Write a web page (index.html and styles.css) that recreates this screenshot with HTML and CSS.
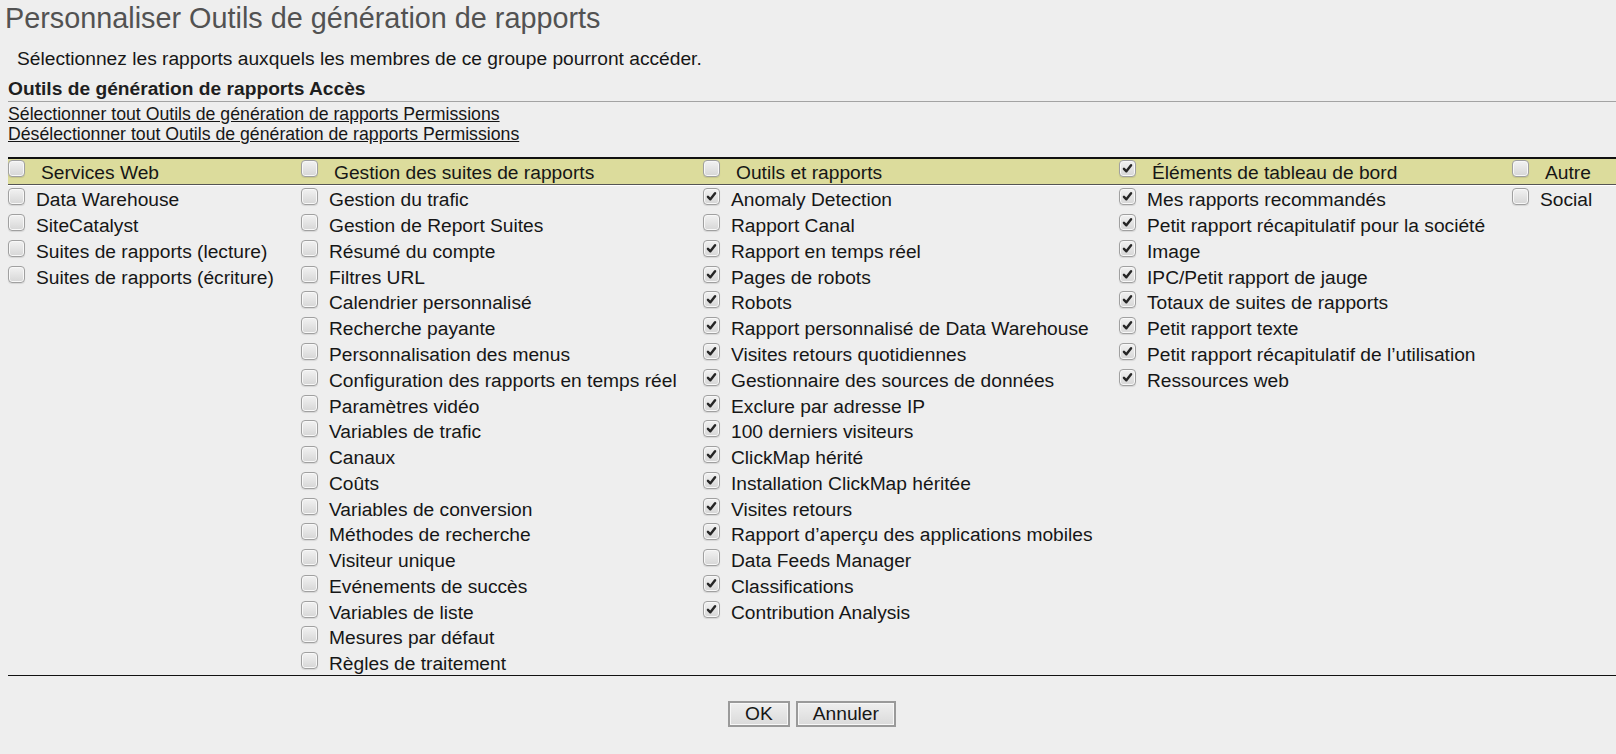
FILE: index.html
```html
<!DOCTYPE html>
<html lang="fr">
<head>
<meta charset="utf-8">
<title>Personnaliser Outils de génération de rapports</title>
<link rel="stylesheet" href="styles.css">
</head>
<body>
<h1 class="title">Personnaliser Outils de génération de rapports</h1>
<p class="intro">Sélectionnez les rapports auxquels les membres de ce groupe pourront accéder.</p>
<h2 class="section-title">Outils de génération de rapports Accès</h2>
<div class="links">
  <a href="#" class="link">Sélectionner tout Outils de génération de rapports Permissions</a>
  <a href="#" class="link">Désélectionner tout Outils de génération de rapports Permissions</a>
</div>

<div class="perm">
  <div class="perm-head">
    <div class="hcell"><span class="cb"></span><span class="htext">Services Web</span></div>
    <div class="hcell"><span class="cb"></span><span class="htext">Gestion des suites de rapports</span></div>
    <div class="hcell"><span class="cb"></span><span class="htext">Outils et rapports</span></div>
    <div class="hcell"><span class="cb on"><svg viewBox="0 0 16 16"><path d="M4.2 8.4 L6.8 11 L11.8 4.6"/></svg></span><span class="htext">Éléments de tableau de bord</span></div>
    <div class="hcell"><span class="cb"></span><span class="htext">Autre</span></div>
  </div>
  <div class="perm-body">
    <ul class="col">
      <li class="item"><span class="cb"></span>Data Warehouse</li>
      <li class="item"><span class="cb"></span>SiteCatalyst</li>
      <li class="item"><span class="cb"></span>Suites de rapports (lecture)</li>
      <li class="item"><span class="cb"></span>Suites de rapports (écriture)</li>
    </ul>
    <ul class="col">
      <li class="item"><span class="cb"></span>Gestion du trafic</li>
      <li class="item"><span class="cb"></span>Gestion de Report Suites</li>
      <li class="item"><span class="cb"></span>Résumé du compte</li>
      <li class="item"><span class="cb"></span>Filtres URL</li>
      <li class="item"><span class="cb"></span>Calendrier personnalisé</li>
      <li class="item"><span class="cb"></span>Recherche payante</li>
      <li class="item"><span class="cb"></span>Personnalisation des menus</li>
      <li class="item"><span class="cb"></span>Configuration des rapports en temps réel</li>
      <li class="item"><span class="cb"></span>Paramètres vidéo</li>
      <li class="item"><span class="cb"></span>Variables de trafic</li>
      <li class="item"><span class="cb"></span>Canaux</li>
      <li class="item"><span class="cb"></span>Coûts</li>
      <li class="item"><span class="cb"></span>Variables de conversion</li>
      <li class="item"><span class="cb"></span>Méthodes de recherche</li>
      <li class="item"><span class="cb"></span>Visiteur unique</li>
      <li class="item"><span class="cb"></span>Evénements de succès</li>
      <li class="item"><span class="cb"></span>Variables de liste</li>
      <li class="item"><span class="cb"></span>Mesures par défaut</li>
      <li class="item"><span class="cb"></span>Règles de traitement</li>
    </ul>
    <ul class="col">
      <li class="item"><span class="cb on"><svg viewBox="0 0 16 16"><path d="M4.2 8.4 L6.8 11 L11.8 4.6"/></svg></span>Anomaly Detection</li>
      <li class="item"><span class="cb"></span>Rapport Canal</li>
      <li class="item"><span class="cb on"><svg viewBox="0 0 16 16"><path d="M4.2 8.4 L6.8 11 L11.8 4.6"/></svg></span>Rapport en temps réel</li>
      <li class="item"><span class="cb on"><svg viewBox="0 0 16 16"><path d="M4.2 8.4 L6.8 11 L11.8 4.6"/></svg></span>Pages de robots</li>
      <li class="item"><span class="cb on"><svg viewBox="0 0 16 16"><path d="M4.2 8.4 L6.8 11 L11.8 4.6"/></svg></span>Robots</li>
      <li class="item"><span class="cb on"><svg viewBox="0 0 16 16"><path d="M4.2 8.4 L6.8 11 L11.8 4.6"/></svg></span>Rapport personnalisé de Data Warehouse</li>
      <li class="item"><span class="cb on"><svg viewBox="0 0 16 16"><path d="M4.2 8.4 L6.8 11 L11.8 4.6"/></svg></span>Visites retours quotidiennes</li>
      <li class="item"><span class="cb on"><svg viewBox="0 0 16 16"><path d="M4.2 8.4 L6.8 11 L11.8 4.6"/></svg></span>Gestionnaire des sources de données</li>
      <li class="item"><span class="cb on"><svg viewBox="0 0 16 16"><path d="M4.2 8.4 L6.8 11 L11.8 4.6"/></svg></span>Exclure par adresse IP</li>
      <li class="item"><span class="cb on"><svg viewBox="0 0 16 16"><path d="M4.2 8.4 L6.8 11 L11.8 4.6"/></svg></span>100 derniers visiteurs</li>
      <li class="item"><span class="cb on"><svg viewBox="0 0 16 16"><path d="M4.2 8.4 L6.8 11 L11.8 4.6"/></svg></span>ClickMap hérité</li>
      <li class="item"><span class="cb on"><svg viewBox="0 0 16 16"><path d="M4.2 8.4 L6.8 11 L11.8 4.6"/></svg></span>Installation ClickMap héritée</li>
      <li class="item"><span class="cb on"><svg viewBox="0 0 16 16"><path d="M4.2 8.4 L6.8 11 L11.8 4.6"/></svg></span>Visites retours</li>
      <li class="item"><span class="cb on"><svg viewBox="0 0 16 16"><path d="M4.2 8.4 L6.8 11 L11.8 4.6"/></svg></span>Rapport d’aperçu des applications mobiles</li>
      <li class="item"><span class="cb"></span>Data Feeds Manager</li>
      <li class="item"><span class="cb on"><svg viewBox="0 0 16 16"><path d="M4.2 8.4 L6.8 11 L11.8 4.6"/></svg></span>Classifications</li>
      <li class="item"><span class="cb on"><svg viewBox="0 0 16 16"><path d="M4.2 8.4 L6.8 11 L11.8 4.6"/></svg></span>Contribution Analysis</li>
    </ul>
    <ul class="col">
      <li class="item"><span class="cb on"><svg viewBox="0 0 16 16"><path d="M4.2 8.4 L6.8 11 L11.8 4.6"/></svg></span>Mes rapports recommandés</li>
      <li class="item"><span class="cb on"><svg viewBox="0 0 16 16"><path d="M4.2 8.4 L6.8 11 L11.8 4.6"/></svg></span>Petit rapport récapitulatif pour la société</li>
      <li class="item"><span class="cb on"><svg viewBox="0 0 16 16"><path d="M4.2 8.4 L6.8 11 L11.8 4.6"/></svg></span>Image</li>
      <li class="item"><span class="cb on"><svg viewBox="0 0 16 16"><path d="M4.2 8.4 L6.8 11 L11.8 4.6"/></svg></span>IPC/Petit rapport de jauge</li>
      <li class="item"><span class="cb on"><svg viewBox="0 0 16 16"><path d="M4.2 8.4 L6.8 11 L11.8 4.6"/></svg></span>Totaux de suites de rapports</li>
      <li class="item"><span class="cb on"><svg viewBox="0 0 16 16"><path d="M4.2 8.4 L6.8 11 L11.8 4.6"/></svg></span>Petit rapport texte</li>
      <li class="item"><span class="cb on"><svg viewBox="0 0 16 16"><path d="M4.2 8.4 L6.8 11 L11.8 4.6"/></svg></span>Petit rapport récapitulatif de l’utilisation</li>
      <li class="item"><span class="cb on"><svg viewBox="0 0 16 16"><path d="M4.2 8.4 L6.8 11 L11.8 4.6"/></svg></span>Ressources web</li>
    </ul>
    <ul class="col">
      <li class="item"><span class="cb"></span>Social</li>
    </ul>
  </div>
</div>

<div class="actions">
  <button type="button" class="btn">OK</button>
  <button type="button" class="btn">Annuler</button>
</div>
</body>
</html>
```

FILE: styles.css
```css
html, body {
  margin: 0;
  padding: 0;
  background: #eeeeee;
}

body {
  padding-left: 8px;
  font-family: "Liberation Sans", Arial, sans-serif;
  color: #161616;
  font-size: 19.2px;
}

.title {
  margin: 0 0 0 -3px;
  padding-top: 1.5px;
  font-size: 28.8px;
  line-height: 33px;
  font-weight: normal;
  color: #525252;
}

.intro {
  margin: 13.8px 0 0 9px;
  font-size: 19.2px;
  line-height: 22px;
}

.section-title {
  margin: 7.6px 0 0 0;
  padding-bottom: 1px;
  border-bottom: 1px solid #a3a3a3;
  font-size: 19.2px;
  line-height: 22px;
  font-weight: bold;
  color: #1e1e1e;
}

.links {
  display: flex;
  flex-direction: column;
  align-items: flex-start;
  padding-top: 2px;
}

.link {
  font-size: 17.7px;
  line-height: 20.6px;
  color: #161616;
  text-decoration: underline;
}

.perm {
  margin-top: 11.8px;
}

.perm-head {
  display: grid;
  grid-template-columns: 293px 402px 416px 393px 1fr;
  background: #dcdc9c;
  border-top: 2px solid #111;
  border-bottom: 1px solid #555;
  box-shadow: 0 1px 0 #ffffff;
  height: 25px;
}

.hcell {
  display: flex;
  align-items: flex-start;
  padding-top: 3px;
  line-height: 22px;
  white-space: nowrap;
}

.hcell .cb {
  margin-top: -2px;
  margin-right: 16px;
}

.perm-body {
  display: grid;
  grid-template-columns: 293px 402px 416px 393px 1fr;
  margin-top: 1px;
  border-bottom: 1px solid #111;
}

.col {
  list-style: none;
  margin: 0;
  padding: 0;
}

.item {
  display: flex;
  align-items: flex-start;
  height: 25.77px;
  box-sizing: border-box;
  padding-top: 2.5px;
  line-height: 23px;
  white-space: nowrap;
}

.item .cb {
  margin-top: 0;
  margin-right: 11px;
}

.cb {
  flex: none;
  width: 17px;
  height: 17px;
  box-sizing: border-box;
  border: 1px solid #a0a0a0;
  border-radius: 4px;
  background: linear-gradient(#f2f2f2, #d6d6d6);
  box-shadow: inset 0 0 0 1px #f8f8f8, 0 1px 1px rgba(0,0,0,0.10);
  display: inline-flex;
  align-items: center;
  justify-content: center;
}

.cb svg {
  width: 15px;
  height: 15px;
}

.cb path {
  fill: none;
  stroke: #262626;
  stroke-width: 2.6;
  stroke-linecap: round;
  stroke-linejoin: round;
}

.actions {
  display: flex;
  justify-content: center;
  gap: 6px;
  margin-top: 25px;
}

.btn {
  font-family: "Liberation Sans", Arial, sans-serif;
  font-size: 19.2px;
  line-height: 22px;
  height: 26px;
  padding: 0 15px;
  color: #161616;
  background: linear-gradient(#efefef, #dadada);
  border: 2px solid #9a9a9a;
  box-shadow: inset 0 0 0 1px #f7f7f7;
  border-radius: 0;
}
```
